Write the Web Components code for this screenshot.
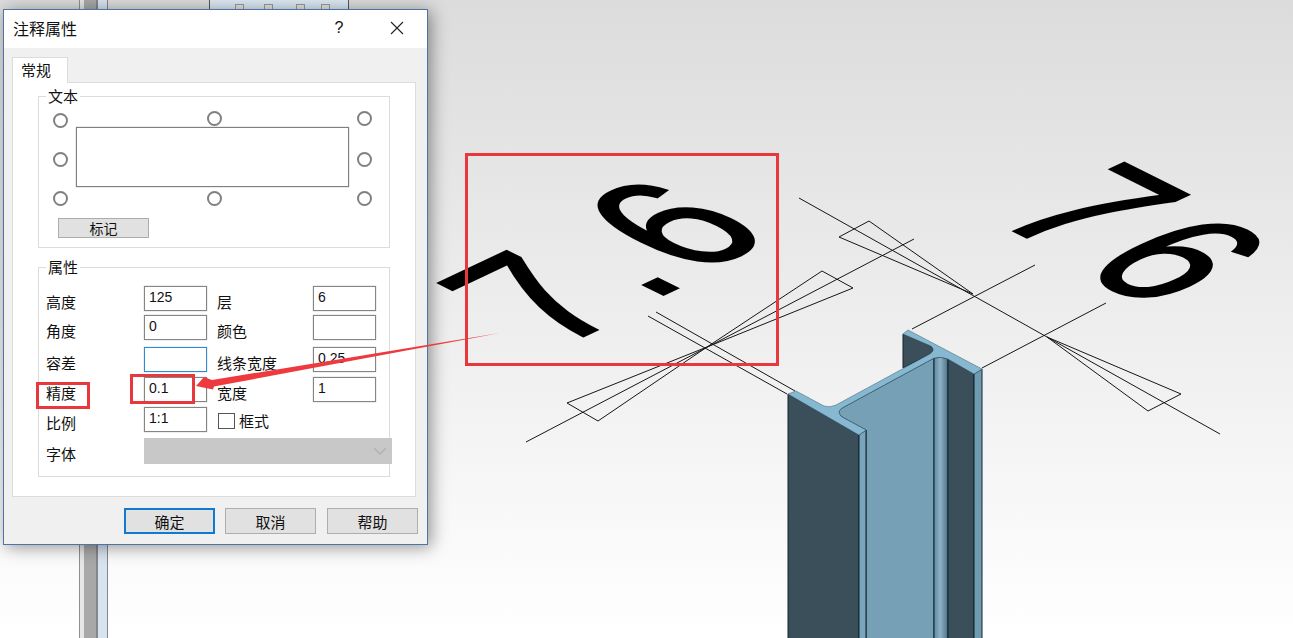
<!DOCTYPE html>
<html lang="zh">
<head>
<meta charset="utf-8">
<title>注释属性</title>
<style>
html, body { margin: 0; height: 100%; overflow: hidden; background: #fff; }
</style>
</head>
<body>
<cad-stage>
    <cad-scene></cad-scene>
    <note-dialog heading="注释属性">
        <form-group legend="文本">
            <anchor-picker></anchor-picker>
            <form-button style="margin: 12px 0 0 19px; width: 91px; height: 20px; font-size: 14px">标记</form-button>
        </form-group>
        <form-group legend="属性" style="margin-top: 19px; height: 210px">
            <props-grid></props-grid>
        </form-group>
        <form-button slot="buttons" primary>确定</form-button>
        <form-button slot="buttons" style="margin-right: 1px">取消</form-button>
        <form-button slot="buttons">帮助</form-button>
    </note-dialog>
    <mark-layer></mark-layer>
</cad-stage>

<script>
const CJK = '"Noto Sans CJK SC", "Liberation Sans", sans-serif'

class CadStage extends HTMLElement {
    constructor() {
        super()
        this.attachShadow({ mode: "open" })
        this.shadowRoot.innerHTML = `
            <style>
            :host {
                display: block;
                position: relative;
                width: 1293px;
                height: 638px;
                overflow: hidden;
                background: linear-gradient(#dbdcdb, #fff);
                font-family: ${CJK};
                color: #111;
            }
            </style>
            <slot></slot>
        `
    }
}

// the 3D view behind the dialog: free canvas, so everything in here has its own coordinates
class CadScene extends HTMLElement {
    constructor() {
        super()
        this.attachShadow({ mode: "open" })
        this.shadowRoot.innerHTML = `
            <style>
            :host { display: block; position: absolute; inset: 0; }
            svg { display: block; }
            .dim { fill: none; stroke: #161616; stroke-width: 1; }
            .num { font-family: "Liberation Sans", sans-serif; font-size: 100px; fill: #000; stroke: #000; stroke-width: 1.500px; }
            .edge { stroke: #13242c; stroke-width: 1; stroke-linejoin: round; }
            </style>
            <svg width="1293" height="638" viewBox="0 0 1293 638">
                <defs>
                    <linearGradient id="fillet" x1="0" x2="1" y1="0" y2="0">
                        <stop offset="0" stop-color="#5f8aa0"/>
                        <stop offset=".45" stop-color="#8db2c5"/>
                        <stop offset="1" stop-color="#4d7186"/>
                    </linearGradient>
                </defs>

                <!-- window behind the dialog -->
                <rect x="79" y="0" width="1" height="638" fill="#8e8e94"/>
                <rect x="80" y="0" width="4" height="638" fill="#e6e6e6"/>
                <rect x="84" y="0" width="12" height="638" fill="#a8a8a8"/>
                <rect x="96" y="0" width="2" height="638" fill="#85858a"/>
                <rect x="98" y="0" width="9" height="638" fill="#d7e3ef"/>
                <rect x="107" y="0" width="1" height="638" fill="#85858f"/>
                <rect x="209" y="0" width="139" height="10" fill="#dce8f3"/>
                <rect x="209" y="0" width="1" height="10" fill="#555"/>
                <rect x="348" y="0" width="1" height="10" fill="#555"/>
                <g fill="#e4e4e4" stroke="#9a9a9a">
                    <rect x="235.500" y="4.500" width="8" height="8"/>
                    <rect x="264.500" y="4.500" width="8" height="8"/>
                    <rect x="296.500" y="4.500" width="8" height="8"/>
                    <rect x="321.500" y="4.500" width="8" height="8"/>
                </g>

                <!-- dimension lines -->
                <path class="dim" d="M799,198 L1220,434"/>
                <path class="dim" d="M912,329 L1035,265"/>
                <path class="dim" d="M982,368 L1106,303"/>
                <path class="dim" d="M526,442 L914,239"/>
                <path class="dim" d="M648,316 L787,394"/>
                <path class="dim" d="M656,312 L795,391"/>
                <path class="dim" d="M973,294 L869,221 L839,237 Z"/>
                <path class="dim" d="M1047,337 L1181,394 L1148,411 Z"/>
                <path class="dim" d="M707,347 L822,271 L853,288 Z"/>
                <path class="dim" d="M707,347 L567,403 L598,421 Z"/>

                <!-- dimension values lie flat in the view -->
                <text class="num" transform="matrix(1.5 -.71 1.826 .904 556.5 349)" dx="0 9 5.250" dy="0 -2.100 -2.570">7.6</text>
                <text class="num" transform="matrix(1.42 .71 -1.86 .864 988.7 218.4)" dx="0 10.500" dy="0 4.600">76</text>

                <!-- steel section -->
                <path class="edge" fill="#3a4f59" d="M903,334 L903,368 L930,354 Q936,350 931,346 Z"/>
                <path class="edge" fill="#76a0b5" d="M842,417 Q836,412 842,408 L934,358 L934,639 L866,639 L866,430 Z"/>
                <path class="edge" fill="url(#fillet)" d="M934,358 Q941,356 948,359 L948,639 L934,639 Z"/>
                <path class="edge" fill="#3a4f59" d="M948,359 L974,374 L974,639 L948,639 Z"/>
                <path class="edge" fill="#6f9bb1" d="M974,374 L982,369 L982,639 L974,639 Z"/>
                <path class="edge" fill="#3a4f59" d="M788,394 L859,435 L859,639 L788,639 Z"/>
                <path class="edge" fill="#78a5bb" d="M859,435 L866,430 L866,639 L859,639 Z"/>
                <path fill="#86b9d1" stroke="#4b6f80" stroke-width=".6" d="M788,394 L796,391 L824,406 Q830,408 836,405 L930,354 Q936,350 931,346 L903,334 L908,330 L982,369 L974,374 L948,359 Q941,356 934,358 L842,408 Q836,412 842,417 L866,430 L859,435 Z"/>
            </svg>
        `
    }
}

class NoteDialog extends HTMLElement {
    constructor() {
        super()
        this.attachShadow({ mode: "open" })
        this.shadowRoot.innerHTML = `
            <style>
            :host {
                display: flex;
                flex-direction: column;
                position: absolute;
                left: 3px;
                top: 9px;
                width: 425px;
                height: 536px;
                box-sizing: border-box;
                border: 1px solid #4c74a6;
                background: #f0f0f0;
                box-shadow: 3px 2px 16px rgba(0, 0, 0, .42);
            }
            .titlebar {
                display: flex;
                align-items: center;
                height: 38px;
                flex: none;
                padding: 0 0 2px 9px;
                box-sizing: border-box;
                background: #fff;
                font-size: 16px;
            }
            .title { flex: 1; }
            .help { width: 20px; margin-right: 28px; text-align: center; font: 16px "Liberation Sans", sans-serif; }
            .close { display: flex; justify-content: center; width: 40px; margin-right: 10px; }
            .body {
                display: flex;
                flex-direction: column;
                flex: 1;
                padding: 9px 9px 0 8px;
            }
            .tab {
                position: relative;
                z-index: 1;
                width: 56px;
                height: 26px;
                box-sizing: border-box;
                margin-bottom: -1px;
                padding-left: 8px;
                border: 1px solid #dcdcdc;
                border-bottom: 0;
                background: #fff;
                font-size: 15px;
                line-height: 23px;
            }
            .pane {
                height: 415px;
                box-sizing: border-box;
                margin-right: 2px;
                padding: 13px 0 0 25px;
                border: 1px solid #dcdcdc;
                background: #fff;
            }
            .buttons {
                display: flex;
                justify-content: flex-end;
                gap: 10px;
                margin-top: 11px;
            }
            </style>
            <div class="titlebar">
                <div class="title"></div>
                <div class="help">?</div>
                <div class="close">
                    <svg width="14" height="14" viewBox="0 0 14 14"><path d="M1,1 L13,13 M13,1 L1,13" fill="none" stroke="#222" stroke-width="1.100"/></svg>
                </div>
            </div>
            <div class="body">
                <div class="tab">常规</div>
                <div class="pane"><slot></slot></div>
                <div class="buttons"><slot name="buttons"></slot></div>
            </div>
        `
    }

    connectedCallback() {
        this.shadowRoot.querySelector(".title").textContent = this.getAttribute("heading")
    }
}

class FormGroup extends HTMLElement {
    constructor() {
        super()
        this.attachShadow({ mode: "open" })
        this.shadowRoot.innerHTML = `
            <style>
            :host {
                display: block;
                position: relative;
                width: 352px;
                height: 152px;
                box-sizing: border-box;
                border: 1px solid #dcdcdc;
            }
            .legend {
                position: absolute;
                left: 7px;
                top: -11px;
                padding: 0 2px;
                background: #fff;
                font-size: 15px;
                line-height: 20px;
            }
            </style>
            <div class="legend"></div>
            <slot></slot>
        `
    }

    connectedCallback() {
        this.shadowRoot.querySelector(".legend").textContent = this.getAttribute("legend")
    }
}

class AnchorPicker extends HTMLElement {
    constructor() {
        super()
        this.attachShadow({ mode: "open" })
        this.shadowRoot.innerHTML = `
            <style>
            :host {
                display: grid;
                grid-template-columns: 15px 8px 131px 15px 127px 8px 15px;
                grid-template-rows: 17px 60px 19px;
                margin: 13px 0 0 14px;
                align-items: center;
            }
            .radio {
                width: 15px;
                height: 15px;
                box-sizing: border-box;
                border: 2px solid #808080;
                border-radius: 50%;
                background: #fff;
            }
            .low { margin-top: 4px; }
            .box {
                grid-column: 3 / span 3;
                grid-row: 2;
                height: 60px;
                box-sizing: border-box;
                border: 1px solid #7f7f7f;
                box-shadow: 0 0 1px #888;
                background: #fff;
            }
            </style>
            <div class="radio low" style="grid-column: 1; grid-row: 1"></div>
            <div class="radio" style="grid-column: 4; grid-row: 1"></div>
            <div class="radio" style="grid-column: 7; grid-row: 1"></div>
            <div class="radio low" style="grid-column: 1; grid-row: 2"></div>
            <div class="box"></div>
            <div class="radio low" style="grid-column: 7; grid-row: 2"></div>
            <div class="radio low" style="grid-column: 1; grid-row: 3"></div>
            <div class="radio low" style="grid-column: 4; grid-row: 3"></div>
            <div class="radio low" style="grid-column: 7; grid-row: 3"></div>
        `
    }
}

class FormButton extends HTMLElement {
    constructor() {
        super()
        this.attachShadow({ mode: "open" })
        this.shadowRoot.innerHTML = `
            <style>
            :host {
                display: flex;
                align-items: center;
                justify-content: center;
                width: 91px;
                height: 26px;
                box-sizing: border-box;
                border: 1px solid #adadad;
                background: #e1e1e1;
                font-size: 15px;
            }
            :host([primary]) { border: 2px solid #0f7ad0; }
            </style>
            <slot></slot>
        `
    }
}

class PropsGrid extends HTMLElement {
    constructor() {
        super()
        this.attachShadow({ mode: "open" })
        this.shadowRoot.innerHTML = `
            <style>
            :host {
                display: grid;
                grid-template-columns: 98px 63px 106px 63px;
                grid-template-rows: 29px 32px 30px 30px 31px 26px;
                padding: 18px 0 0 7px;
                align-items: start;
                font-size: 15px;
            }
            .label { line-height: 20px; margin-top: 6px; }
            .right { padding-left: 10px; }
            .input {
                width: 63px;
                height: 25px;
                box-sizing: border-box;
                padding-left: 4px;
                border: 1px solid #858585;
                box-shadow: 0 0 1px #999;
                background: #fff;
                font: 14px/21px "Liberation Sans", sans-serif;
            }
            .focus { border-color: #2c8ad6; }
            .check { display: flex; align-items: center; gap: 4px; padding-left: 11px; margin-top: 4px; line-height: 20px; }
            .box { width: 17px; height: 16px; box-sizing: border-box; border: 1px solid #555; background: #fff; }
            .select {
                display: flex;
                align-items: center;
                justify-content: flex-end;
                grid-column: 2 / span 3;
                width: 248px;
                height: 26px;
                padding-right: 5px;
                box-sizing: border-box;
                background: #c8c8c8;
            }
            </style>
            <div class="label">高度</div>
            <div class="input">125</div>
            <div class="label right">层</div>
            <div class="input">6</div>

            <div class="label">角度</div>
            <div class="input">0</div>
            <div class="label right">颜色</div>
            <div class="input"></div>

            <div class="label">容差</div>
            <div class="input focus"></div>
            <div class="label right">线条宽度</div>
            <div class="input">0.25</div>

            <div class="label">精度</div>
            <div class="input">0.1</div>
            <div class="label right">宽度</div>
            <div class="input">1</div>

            <div class="label">比例</div>
            <div class="input">1:1</div>
            <div class="check" style="grid-column: 3 / span 2"><span class="box"></span>框式</div>

            <div class="label">字体</div>
            <div class="select">
                <svg width="14" height="8" viewBox="0 0 14 8"><path d="M1,1 L7,7 L13,1" fill="none" stroke="#b0b0b0" stroke-width="1.300"/></svg>
            </div>
        `
    }
}

// red markup drawn over the screenshot
class MarkLayer extends HTMLElement {
    constructor() {
        super()
        this.attachShadow({ mode: "open" })
        this.shadowRoot.innerHTML = `
            <style>
            :host { display: block; position: absolute; inset: 0; pointer-events: none; }
            svg { display: block; }
            rect { fill: none; stroke: #e8383c; stroke-width: 3; }
            </style>
            <svg width="1293" height="638" viewBox="0 0 1293 638">
                <rect x="466.500" y="154.500" width="311" height="210"/>
                <rect x="37.500" y="383.500" width="51" height="24"/>
                <rect x="131.500" y="375.500" width="62" height="27"/>
                <polygon fill="#ee3a3e" points="500,333 212,380 204,377 196,386 213,389.500 214,386.500"/>
            </svg>
        `
    }
}

customElements.define("cad-stage", CadStage)
customElements.define("cad-scene", CadScene)
customElements.define("note-dialog", NoteDialog)
customElements.define("form-group", FormGroup)
customElements.define("anchor-picker", AnchorPicker)
customElements.define("form-button", FormButton)
customElements.define("props-grid", PropsGrid)
customElements.define("mark-layer", MarkLayer)
</script>
</body>
</html>
